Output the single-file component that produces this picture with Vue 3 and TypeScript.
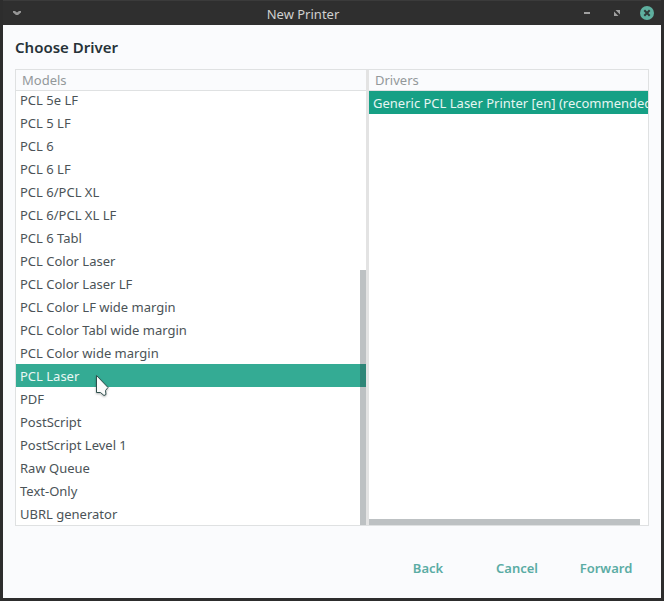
<script setup lang="ts">
import { ref } from 'vue'

const models: string[] = [
  'PCL 5e LF',
  'PCL 5 LF',
  'PCL 6',
  'PCL 6 LF',
  'PCL 6/PCL XL',
  'PCL 6/PCL XL LF',
  'PCL 6 Tabl',
  'PCL Color Laser',
  'PCL Color Laser LF',
  'PCL Color LF wide margin',
  'PCL Color Tabl wide margin',
  'PCL Color wide margin',
  'PCL Laser',
  'PDF',
  'PostScript',
  'PostScript Level 1',
  'Raw Queue',
  'Text-Only',
  'UBRL generator',
]
const drivers: string[] = ['Generic PCL Laser Printer [en] (recommended']

const model = ref('PCL Laser')
const driver = ref(drivers[0])
</script>

<template>
  <div class="window">
    <header class="titlebar">
      <button class="tool" type="button" aria-label="Window menu">
        <svg width="10" height="6" viewBox="0 0 10 6">
          <path d="M1 1h2l2 1.6L7 1h2v1.6L6 5H4L1 2.6z" fill="#979797" />
        </svg>
      </button>
      <span class="caption">New Printer</span>
      <div class="tools">
        <button class="tool" type="button" aria-label="Minimize">
          <svg width="6" height="14" viewBox="0 0 6 14"><path d="M0 6h6v2H0z" fill="#a0a0a0" /></svg>
        </button>
        <button class="tool" type="button" aria-label="Maximize">
          <svg width="6" height="14" viewBox="0 0 6 14">
            <path d="M1.5 4H6v4.5zM0 5.5L4.500 10H0z" fill="#a0a0a0" />
          </svg>
        </button>
        <button class="tool" type="button" aria-label="Close">
          <svg width="14" height="14" viewBox="0 0 14 14">
            <circle cx="7" cy="7" r="7" fill="#5eaf9f" />
            <path d="M4.300 4.300l5.400 5.400M9.700 4.300l-5.400 5.400" stroke="#2f3a38" stroke-width="2" />
          </svg>
        </button>
      </div>
    </header>

    <main class="content">
      <h1>Choose Driver</h1>
      <div class="panes">
        <section class="pane">
          <h2>Models</h2>
          <div class="view">
            <ul class="list list-end">
              <li v-for="name in models" :key="name">
                <button
                  type="button"
                  class="row"
                  :class="{ picked: name === model }"
                  :aria-pressed="name === model"
                  @click="model = name"
                >{{ name }}</button>
              </li>
            </ul>
            <div class="thumb thumb-v"></div>
            <svg class="pointer" width="16" height="25" viewBox="0 0 16 25">
              <path
                d="M2.500 2.500V19.500H6.500L10 22.500L12 21.500L11.500 17.500L14 14.500Z"
                fill="#fbfbfb" stroke="#2f4f4c" stroke-width="1" stroke-linejoin="round"
              />
            </svg>
          </div>
        </section>
        <div class="divider"></div>
        <section class="pane">
          <h2>Drivers</h2>
          <div class="view">
            <ul class="list">
              <li v-for="name in drivers" :key="name">
                <button
                  type="button"
                  class="row"
                  :class="{ focused: name === driver }"
                  :aria-pressed="name === driver"
                  @click="driver = name"
                >{{ name }}</button>
              </li>
            </ul>
            <div class="thumb thumb-h"></div>
          </div>
        </section>
      </div>
      <footer class="actions">
        <button type="button">Back</button>
        <button type="button">Cancel</button>
        <button type="button">Forward</button>
      </footer>
    </main>
  </div>
</template>

<style>
body {
  margin: 0;
}
</style>

<style scoped>
.window {
  box-sizing: border-box;
  display: flex;
  flex-direction: column;
  height: 100vh;
  padding: 0 3px 3px;
  background: #2d2d2d;
  font: 13px/23px "Noto Sans", sans-serif;
  color: #4b5357;
}
button {
  margin: 0;
  padding: 0;
  border: 0;
  background: none;
  font: inherit;
  color: inherit;
}
svg {
  display: block;
}
.titlebar {
  box-sizing: border-box;
  flex: none;
  display: grid;
  grid-template-columns: auto 1fr auto;
  align-items: center;
  height: 25px;
  padding: 0 7px 2px 9px;
  border-top: 1px solid #3b3b3b;
  background: #2f2f2f;
}
.caption {
  padding-top: 3px;
  line-height: 20px;
  text-align: center;
  color: #d0d0cf;
}
.tools {
  display: flex;
  align-items: center;
}
.tools .tool + .tool {
  margin-left: 24px;
}
.tools .tool:last-child {
  margin-left: 20px;
}
.content {
  flex: 1;
  min-height: 0;
  display: flex;
  flex-direction: column;
  padding: 10px 12px 16px;
  background: #fafbfd;
}
h1 {
  margin: 0 0 10px;
  font-size: 15px;
  line-height: 24px;
  font-weight: 600;
  color: #263238;
}
.panes {
  flex: 1;
  min-height: 0;
  display: grid;
  grid-template-columns: minmax(0, 350fr) 3px minmax(0, 279fr);
  border: 1px solid #dfe1e2;
}
.divider {
  background: #e3e3e3;
}
.pane {
  min-height: 0;
  display: flex;
  flex-direction: column;
}
h2 {
  margin: 0;
  padding: 0 6px;
  border-bottom: 1px solid #dfe1e2;
  font-size: 13px;
  line-height: 20px;
  font-weight: 400;
  color: #93989a;
}
.view {
  position: relative;
  flex: 1;
  min-height: 0;
  overflow: hidden;
  background: #fff;
}
.list {
  display: flex;
  flex-direction: column;
  height: 100%;
  margin: 0;
  padding: 0;
  list-style: none;
}
.list-end {
  justify-content: flex-end;
}
.list li {
  flex: none;
}
.row {
  box-sizing: border-box;
  display: block;
  width: 100%;
  height: 23px;
  padding: 2px 0 0 4px;
  line-height: 21px;
  text-align: left;
  white-space: nowrap;
}
.row.picked {
  background: #34ab94;
  color: #eaf7f4;
}
.row.focused {
  background: #16a085;
  color: #e6f5f2;
}
.thumb {
  position: absolute;
  background: rgba(38, 50, 56, 0.3);
}
.thumb-v {
  right: 0;
  bottom: 0;
  width: 6px;
  height: 58.8%;
}
.thumb-h {
  left: 0;
  bottom: 0;
  width: 97%;
  height: 6px;
}
.pointer {
  position: absolute;
  left: 78px;
  top: 282px;
  filter: drop-shadow(0 1px 1px rgba(0, 0, 0, 0.3));
}
.actions {
  display: flex;
  justify-content: flex-end;
  column-gap: 5px;
  padding: 28px 1px 0 0;
}
.actions button {
  width: 84px;
  height: 28px;
  font-weight: 600;
  color: #5aaca4;
}
</style>
